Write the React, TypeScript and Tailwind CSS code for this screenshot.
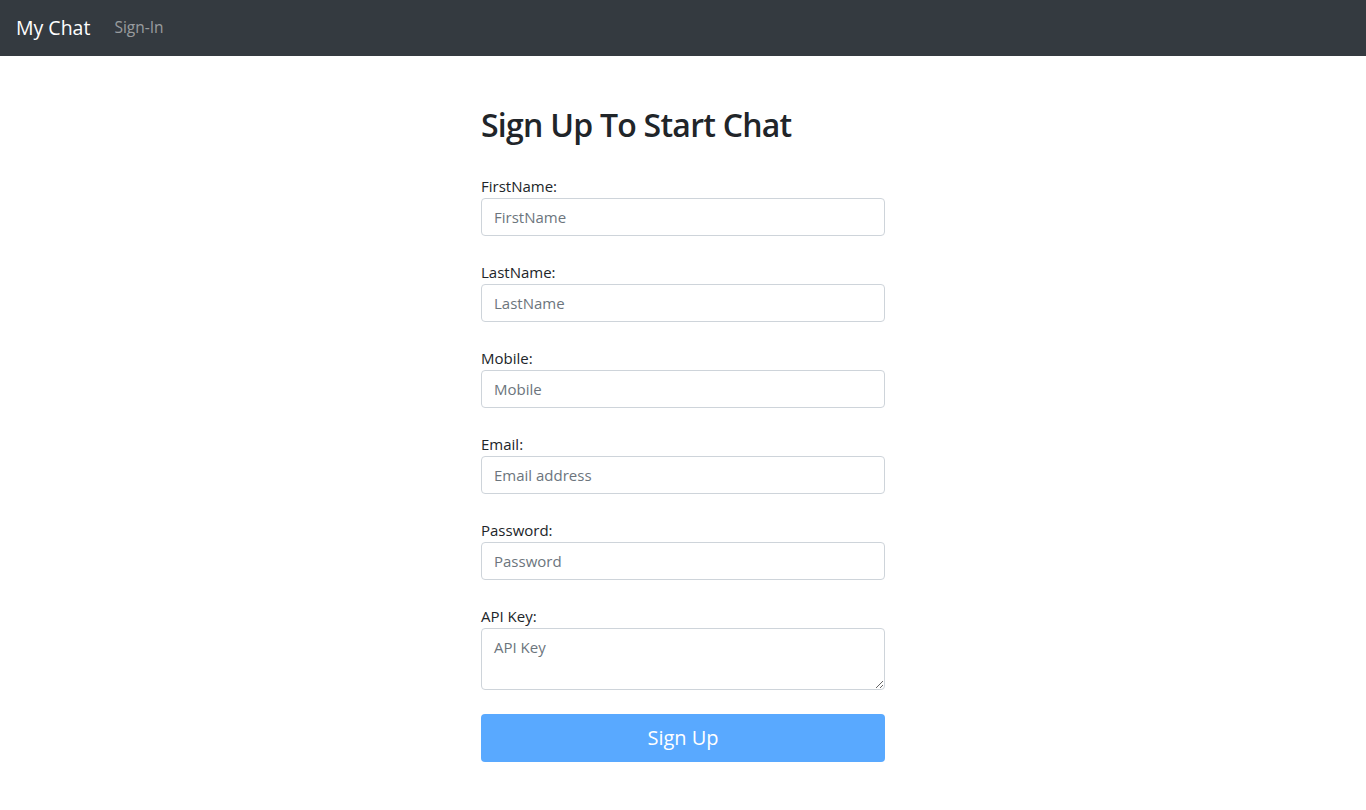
import React from 'react';

const fields = [
  { label: 'FirstName:', placeholder: 'FirstName', type: 'text' },
  { label: 'LastName:', placeholder: 'LastName', type: 'text' },
  { label: 'Mobile:', placeholder: 'Mobile', type: 'text' },
  { label: 'Email:', placeholder: 'Email address', type: 'email' },
  { label: 'Password:', placeholder: 'Password', type: 'password' },
];

const inputCls =
  'block w-full rounded-[4px] border border-[#ced4da] bg-white px-3 py-[6px] text-[15px] leading-6 text-[#495057] placeholder:text-[#6c757d] outline-none';

export default function App() {
  return (
    <div className="min-h-screen bg-white text-[#212529] font-['Open_Sans',sans-serif]">
      {/* navbar */}
      <nav className="flex h-14 items-center bg-[#343a40] px-4">
        <a href="#" className="mr-4 text-[19.5px] leading-[30px] text-white">My Chat</a>
        <a href="#" className="px-2 text-[15.5px] text-white/50">Sign-In</a>
      </nav>

      <div className="mx-auto w-[404px] pt-[50px]">
        <h2 className="mb-[30px] text-[32px] font-semibold leading-[38px] tracking-[-0.75px]">
          Sign Up To Start Chat
        </h2>

        <form onSubmit={(e) => e.preventDefault()}>
          {fields.map((f) => (
            <div key={f.label} className="mb-6">
              <label className="block text-[15px] leading-6">{f.label}</label>
              <input type={f.type} placeholder={f.placeholder} className={inputCls} />
            </div>
          ))}

          <div className="mb-6">
            <label className="block text-[15px] leading-6">API Key:</label>
            <textarea rows={2} placeholder="API Key" className={inputCls + ' h-[62px]'} />
          </div>

          <button
            type="submit"
            disabled
            className="block h-12 w-full rounded-[4px] bg-[#59a9ff] text-xl text-white"
          >
            Sign Up
          </button>
        </form>
      </div>
    </div>
  );
}
